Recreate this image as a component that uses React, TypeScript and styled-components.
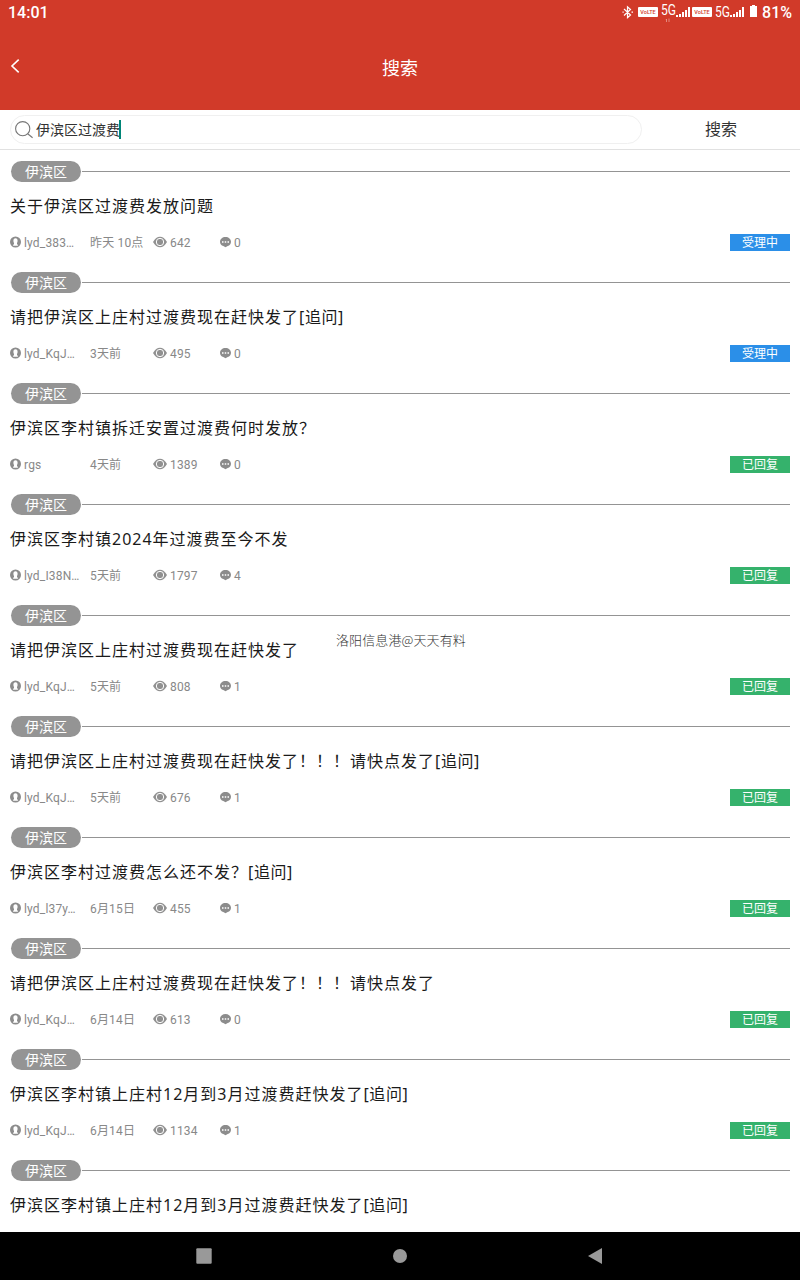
import React from "react";
import styled, { createGlobalStyle } from "styled-components";

const GlobalStyle = createGlobalStyle`
  * { box-sizing: border-box; }
  body {
    margin: 0;
    background: #fff;
    font-family: Roboto, "Noto Sans CJK SC", sans-serif;
  }
`;

const Screen = styled.div`
  position: relative;
  width: 800px;
  height: 1280px;
  display: flex;
  flex-direction: column;
  overflow: hidden;
  background: #fff;
`;

const Header = styled.header`
  height: 110px;
  flex: none;
  background: #d13a29;
  color: #fff;
`;

const StatusBar = styled.div`
  height: 26px;
  padding: 0 8px;
  display: flex;
  justify-content: space-between;
  align-items: center;
  font-size: 16px;
  font-weight: 500;
  line-height: 26px;
`;

const StatusIcons = styled.div`
  display: flex;
  align-items: center;
  height: 26px;
`;

const TitleBar = styled.div`
  height: 84px;
  display: grid;
  grid-template-columns: 40px 1fr 40px;
  align-items: center;
`;

const BackButton = styled.button`
  border: 0;
  padding: 0 0 4px 9px;
  background: none;
  color: #fff;
  display: flex;
`;

const PageTitle = styled.h1`
  margin: 0;
  padding-top: 1px;
  text-align: center;
  font-size: 18px;
  line-height: 26px;
  font-weight: 400;
`;

const SearchBar = styled.div`
  height: 40px;
  flex: none;
  padding-left: 10px;
  display: flex;
  align-items: center;
  border-bottom: 1px solid #e1e1e1;
`;

const SearchField = styled.div`
  width: 632px;
  height: 29px;
  padding-left: 4px;
  display: flex;
  align-items: center;
  border: 1px solid #f0f0f0;
  border-radius: 15px;
  color: #333;
  font-size: 14px;
`;

const Query = styled.span`
  margin-left: 3px;
  line-height: 20px;
`;

const Caret = styled.span`
  width: 2px;
  height: 19px;
  margin-left: -1px;
  background: #008577;
`;

const SearchButton = styled.button`
  flex: 1;
  border: 0;
  padding: 0 0 3px;
  background: none;
  color: #333;
  font: inherit;
  font-size: 16px;
`;

const List = styled.main`
  flex: 1;
  min-height: 0;
  overflow: hidden;
`;

const Item = styled.article`
  height: 111px;
  padding: 11px 10px 0;
`;

const Category = styled.div`
  height: 21px;
  padding-left: 1px;
  display: flex;
  align-items: center;
`;

const Pill = styled.span`
  width: 70px;
  height: 21px;
  border-radius: 11px;
  background: #949494;
  color: #fff;
  font-size: 14px;
  line-height: 23px;
  text-align: center;
`;

const Rule = styled.span`
  flex: 1;
  height: 1px;
  margin-left: 1px;
  background: #949494;
`;

const Subject = styled.h2`
  margin: 12px 0 0;
  color: #1a1a1a;
  font-family: "Noto Sans", "Noto Sans CJK SC", sans-serif;
  font-size: 16px;
  font-weight: 400;
  line-height: 24px;
  letter-spacing: 1px;
  white-space: nowrap;
`;

const Tag = styled.span`
  letter-spacing: 0.6px;
`;

const Meta = styled.div`
  height: 18px;
  margin-top: 15px;
  display: grid;
  grid-template-columns: 80px 63px 67px 1fr 60px;
  align-items: center;
  color: #888;
  font-size: 12px;
  line-height: 18px;
  white-space: nowrap;
`;

const Cell = styled.span<{ $gap?: number }>`
  padding-top: 1px;
  display: flex;
  align-items: center;
  gap: ${(p) => p.$gap ?? 0}px;
  letter-spacing: 0.17px;

  svg {
    flex: none;
    margin-bottom: 3px;
  }
`;

const Status = styled.span<{ $done: boolean }>`
  height: 17px;
  background: ${(p) => (p.$done ? "#35b26c" : "#2b8fe8")};
  color: #fff;
  line-height: 18px;
  text-align: center;
`;

const Watermark = styled.div`
  position: absolute;
  left: 336px;
  top: 630px;
  color: #333;
  font-family: "Noto Sans CJK SC", sans-serif;
  font-size: 13px;
  font-weight: 300;
  line-height: 20px;
  letter-spacing: 0.1px;
  white-space: nowrap;
`;

const NavBar = styled.nav`
  height: 48px;
  flex: none;
  padding: 0 106px;
  display: flex;
  justify-content: space-around;
  align-items: center;
  background: #000;
`;

const StatusSvg = styled.svg`
  margin: 0 -6px 2px 0;
`;

const StatusGlyphs = () => (
  <StatusSvg width="148" height="24" viewBox="0 0 148 24" fill="#fff">
    <path
      d="M4 9l6.500 6-3 2.700V6.800l3 2.700-6.500 6M2.500 12.200h1.200M11.500 12.200h1.500"
      fill="none"
      stroke="#fff"
      strokeWidth="1.200"
    />
    <rect x="18" y="7" width="20" height="10" rx="1" />
    <rect x="72" y="7" width="20" height="10" rx="1" />
    <g fill="#d13a29" fontSize="5.5" fontWeight="500" textAnchor="middle">
      <text x="28" y="14">VoLTE</text>
      <text x="82" y="14">VoLTE</text>
    </g>
    <g fontSize="14" fontWeight="400">
      <text x="41" y="14.5" textLength="15" lengthAdjust="spacingAndGlyphs">5G</text>
      <text x="95" y="17" textLength="15" lengthAdjust="spacingAndGlyphs">5G</text>
    </g>
    <path d="M46.500 19v3M46 20l.7-1M49 18.500v3.500" stroke="#fff" strokeWidth=".8" opacity=".5" />
    <path d="M56 15h2v2h-2zM59 14h2v3h-2zM62 12h2v5h-2zM65 10h2v7h-2zM68 7h2v10h-2z" />
    <path d="M110 15h2v2h-2zM113 14h2v3h-2zM116 12h2v5h-2zM119 10h2v7h-2zM122 7h2v10h-2z" />
    <path d="M130 6h2V5h3v1h2v11h-7z" />
  </StatusSvg>
);

const BackIcon = () => (
  <svg width="12" height="14" viewBox="0 0 12 14" fill="none" stroke="#fff" strokeWidth="1.6">
    <path d="M9.700.6L3 7l6.700 6.400" />
  </svg>
);

const SearchIcon = () => (
  <svg width="18" height="18" viewBox="0 0 18 18" fill="none" stroke="#777" strokeWidth="1.100">
    <circle cx="7.700" cy="7.700" r="7.100" />
    <path d="M12.700 12.800l4.900 4" />
  </svg>
);

const UserIcon = () => (
  <svg width="11" height="12" viewBox="0 0 11 12">
    <circle cx="5.500" cy="6" r="5.500" fill="#8c8c8c" />
    <path d="M5.500 2.300c-1.500 0-2.100 1-2.100 2.500 0 1 .2 1.700.6 2.200v1.200l-.9.600v.9h4.800v-.9L7 8.200V7c.4-.5.600-1.200.6-2.200 0-1.500-.6-2.500-2.100-2.500z" fill="#fff" />
  </svg>
);

const EyeIcon = () => (
  <svg width="14" height="12" viewBox="0 0 14 12">
    <path d="M0 6C2 2.500 4.300.8 7 .8s5 1.700 7 5.200c-2 3.500-4.300 5.200-7 5.200S2 9.500 0 6z" fill="#909090" />
    <circle cx="7" cy="6" r="3.700" fill="none" stroke="#fff" strokeWidth="1" />
  </svg>
);

const CommentIcon = () => (
  <svg width="11" height="12" viewBox="0 0 11 12">
    <path d="M5.500.9C8.600.9 11 3 11 5.700c0 2.100-1.300 3.800-3.300 4.400L5.500 11.300l-2.200-1.200C1.300 9.500 0 7.800 0 5.700 0 3 2.400.9 5.500.9z" fill="#8c8c8c" />
    <path d="M2 5.200h1.500v1.500H2zM4.750 5.200h1.500v1.500h-1.500zM7.500 5.200H9v1.500H7.500z" fill="#fff" />
  </svg>
);

type Info = {
  user: string;
  time: string;
  views: number;
  replies: number;
  done: boolean;
};

type Post = { title: string; followUp?: boolean; info?: Info };

const posts: Post[] = [
  { title: "关于伊滨区过渡费发放问题", info: { user: "lyd_383…", time: "昨天 10点", views: 642, replies: 0, done: false } },
  { title: "请把伊滨区上庄村过渡费现在赶快发了", followUp: true, info: { user: "lyd_KqJ…", time: "3天前", views: 495, replies: 0, done: false } },
  { title: "伊滨区李村镇拆迁安置过渡费何时发放？", info: { user: "rgs", time: "4天前", views: 1389, replies: 0, done: true } },
  { title: "伊滨区李村镇2024年过渡费至今不发", info: { user: "lyd_I38N…", time: "5天前", views: 1797, replies: 4, done: true } },
  { title: "请把伊滨区上庄村过渡费现在赶快发了", info: { user: "lyd_KqJ…", time: "5天前", views: 808, replies: 1, done: true } },
  { title: "请把伊滨区上庄村过渡费现在赶快发了！！！请快点发了", followUp: true, info: { user: "lyd_KqJ…", time: "5天前", views: 676, replies: 1, done: true } },
  { title: "伊滨区李村过渡费怎么还不发？", followUp: true, info: { user: "lyd_l37y…", time: "6月15日", views: 455, replies: 1, done: true } },
  { title: "请把伊滨区上庄村过渡费现在赶快发了！！！请快点发了", info: { user: "lyd_KqJ…", time: "6月14日", views: 613, replies: 0, done: true } },
  { title: "伊滨区李村镇上庄村12月到3月过渡费赶快发了", followUp: true, info: { user: "lyd_KqJ…", time: "6月14日", views: 1134, replies: 1, done: true } },
  { title: "伊滨区李村镇上庄村12月到3月过渡费赶快发了", followUp: true },
];

const PostInfo = ({ info }: { info: Info }) => (
  <Meta>
    <Cell $gap={3}><UserIcon />{info.user}</Cell>
    <Cell>{info.time}</Cell>
    <Cell $gap={3}><EyeIcon />{info.views}</Cell>
    <Cell $gap={3}><CommentIcon />{info.replies}</Cell>
    <Status $done={info.done}>{info.done ? "已回复" : "受理中"}</Status>
  </Meta>
);

const PostRow = ({ post }: { post: Post }) => (
  <Item>
    <Category>
      <Pill>伊滨区</Pill>
      <Rule />
    </Category>
    <Subject>
      {post.title}
      {post.followUp && <Tag>[追问]</Tag>}
    </Subject>
    {post.info && <PostInfo info={post.info} />}
  </Item>
);

export default function App() {
  return (
    <Screen>
      <GlobalStyle />
      <Header>
        <StatusBar>
          <span>14:01</span>
          <StatusIcons>
            <StatusGlyphs />
            <span>81%</span>
          </StatusIcons>
        </StatusBar>
        <TitleBar>
          <BackButton aria-label="返回"><BackIcon /></BackButton>
          <PageTitle>搜索</PageTitle>
        </TitleBar>
      </Header>
      <SearchBar>
        <SearchField>
          <SearchIcon />
          <Query>伊滨区过渡费</Query>
          <Caret />
        </SearchField>
        <SearchButton>搜索</SearchButton>
      </SearchBar>
      <List>
        {posts.map((post, i) => (
          <PostRow key={i} post={post} />
        ))}
      </List>
      <NavBar>
        <svg width="16" height="16"><rect x=".3" y=".3" width="15.400" height="15.400" rx="1" fill="#999" /></svg>
        <svg width="16" height="16"><circle cx="8" cy="8" r="7" fill="#999" /></svg>
        <svg width="16" height="16"><path d="M0 8L14 0v16z" fill="#999" /></svg>
      </NavBar>
      <Watermark>洛阳信息港@天天有料</Watermark>
    </Screen>
  );
}
